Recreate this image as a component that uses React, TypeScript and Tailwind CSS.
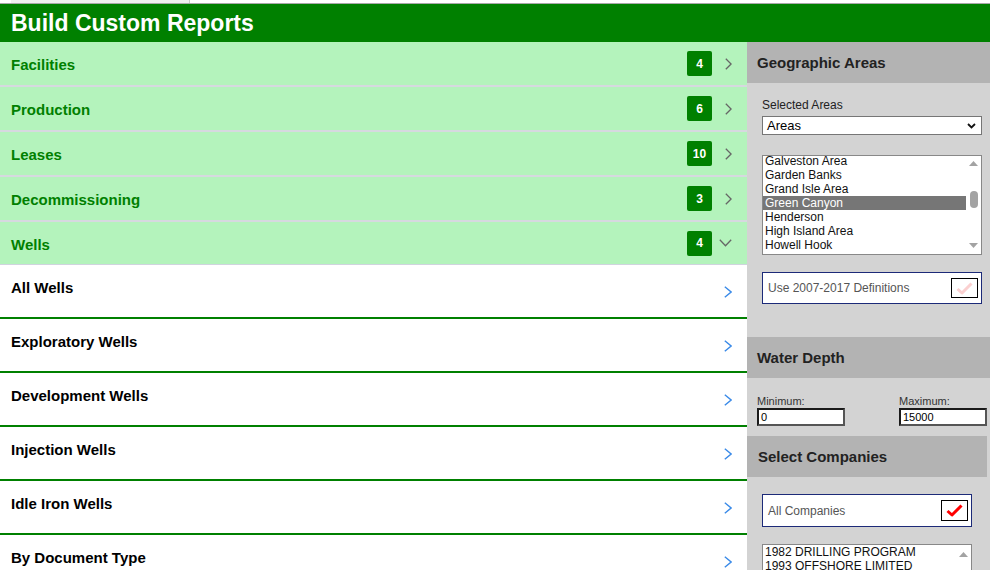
import React from 'react';

const sections = [
  { name: 'Facilities', count: 4 },
  { name: 'Production', count: 6 },
  { name: 'Leases', count: 10 },
  { name: 'Decommissioning', count: 3 },
];

const wells = [
  'All Wells',
  'Exploratory Wells',
  'Development Wells',
  'Injection Wells',
  'Idle Iron Wells',
  'By Document Type',
];

const areas = [
  'Galveston Area',
  'Garden Banks',
  'Grand Isle Area',
  'Green Canyon',
  'Henderson',
  'High Island Area',
  'Howell Hook',
];

const ChevronRight = ({ color = '#666', w = 7, h = 12, sw = 1.3 }: { color?: string; w?: number; h?: number; sw?: number }) => (
  <svg width={w} height={h} viewBox={`0 0 ${w} ${h}`} fill="none">
    <path d={`M0.8 0.8 L${w - 0.9} ${h / 2} L0.8 ${h - 0.8}`} stroke={color} strokeWidth={sw} />
  </svg>
);

const ChevronDown = () => (
  <svg width="13" height="8" viewBox="0 0 13 8" fill="none">
    <path d="M0.8 0.8 L6.5 6.8 L12.2 0.8" stroke="#666" strokeWidth="1.3" />
  </svg>
);

const Check = ({ color }: { color: string }) => (
  <svg width="17" height="13" viewBox="0 0 17 13" fill="none">
    <path d="M1.5 7 L6 11 L15.5 1.5" stroke={color} strokeWidth="3" strokeLinejoin="round" />
  </svg>
);

const Badge = ({ n }: { n: number }) => (
  <div className="w-[25px] h-[25px] rounded-[2px] bg-[#008000] text-white text-[12px] font-bold flex items-center justify-center">
    {n}
  </div>
);

const SectionHeader = ({ children }: { children: React.ReactNode }) => (
  <div className="h-[41px] bg-[#b3b3b3] pl-[10px] pt-[2px] flex items-center text-[15px] font-bold text-[#222]">
    {children}
  </div>
);

const App: React.FC = () => {
  return (
    <div className="w-[990px] h-[570px] overflow-hidden bg-white font-['Liberation_Sans',Arial,sans-serif]">
      {/* browser-ish top strip */}
      <div className="h-[3px] bg-white flex">
        <div className="ml-[11px] w-[179px] h-full bg-[#f0f0f0] border-r border-[#c8c8c8]" />
      </div>
      <div className="h-px bg-[#a8a8a8]" />

      {/* Title bar */}
      <div className="h-[38px] bg-[#008000] px-[11px] flex items-center text-white text-[23px] font-bold">
        Build Custom Reports
      </div>

      <div className="flex">
        {/* Left column */}
        <div className="w-[747px] shrink-0">
          {sections.map((s) => (
            <div
              key={s.name}
              className="h-[45px] border-b-2 border-[#d6d9df] bg-[#b4f3bc] flex items-center pl-[11px] pr-[15px]"
            >
              <span className="flex-1 pt-[4px] text-[15px] font-bold text-[#008000]">{s.name}</span>
              <Badge n={s.count} />
              <div className="ml-[7px] w-[13px] flex justify-end">
                <ChevronRight />
              </div>
            </div>
          ))}
          <div className="h-[43px] border-b border-[#d0d4de] bg-[#b4f3bc] flex items-center pl-[11px] pr-[15px]">
            <span className="flex-1 pt-[4px] text-[15px] font-bold text-[#008000]">Wells</span>
            <Badge n={4} />
            <div className="ml-[7px] w-[13px] flex justify-end">
              <ChevronDown />
            </div>
          </div>

          {wells.map((w) => (
            <div key={w} className="h-[54px] border-b-2 border-[#008000] flex pl-[11px] pr-[15px]">
              <span className="flex-1 pt-[14px] leading-[18px] text-[15px] font-bold text-black">{w}</span>
              <div className="self-center mt-[2px]">
                <ChevronRight color="#3a8ae8" w={8} h={12} sw={1.4} />
              </div>
            </div>
          ))}
        </div>

        {/* Right panel */}
        <div className="flex-1 bg-[#d3d3d3]">
          <SectionHeader>Geographic Areas</SectionHeader>
          <div className="pl-[15px] pt-[15px] pb-[33px]">
            <div className="text-[12px] leading-[14px] text-[#222]">Selected Areas</div>
            <div className="mt-[4px] w-[220px] h-[19px] bg-white border border-[#767676] flex items-center pl-[4px] pr-[5px] text-[13px] text-black">
              <span className="flex-1">Areas</span>
              <svg width="9" height="6" viewBox="0 0 9 6" fill="none">
                <path d="M1 1 L4.5 4.5 L8 1" stroke="#111" strokeWidth="1.8" />
              </svg>
            </div>

            <div className="mt-[20px] w-[220px] h-[100px] bg-white border border-[#888] relative overflow-hidden">
              <div className="-mt-[2px] pr-[15px]">
                {areas.map((a) => (
                  <div
                    key={a}
                    className={`h-[14px] leading-[14px] pl-[2px] text-[12px] ${
                      a === 'Green Canyon' ? 'bg-[#767676] text-white' : 'text-[#111]'
                    }`}
                  >
                    {a}
                  </div>
                ))}
              </div>
              {/* scrollbar */}
              <div className="absolute right-0 top-0 bottom-0 w-[15px] flex flex-col items-center">
                <svg className="mt-[5px]" width="9" height="5" viewBox="0 0 9 5">
                  <path d="M0 5 L4.5 0 L9 5 Z" fill="#a3a3a3" />
                </svg>
                <div className="mt-[25px] w-[8px] h-[17px] rounded-full bg-[#a3a3a3]" />
                <svg className="mt-auto mb-[6px]" width="9" height="5" viewBox="0 0 9 5">
                  <path d="M0 0 L9 0 L4.5 5 Z" fill="#a3a3a3" />
                </svg>
              </div>
            </div>

            <div className="mt-[17px] w-[220px] h-[32px] bg-white border border-[#1c2a78] flex items-center pl-[5px] pr-[3px]">
              <span className="flex-1 text-[12px] text-[#555]">Use 2007-2017 Definitions</span>
              <div className="w-[27px] h-[20px] border border-black bg-white flex items-center justify-center">
                <Check color="#fbd0d0" />
              </div>
            </div>
          </div>

          <SectionHeader>Water Depth</SectionHeader>
          <div className="flex justify-between pl-[10px] pr-[3px] pt-[16px] pb-[10px]">
            {[
              ['Minimum:', '0'],
              ['Maximum:', '15000'],
            ].map(([label, val]) => (
              <div key={label} className="w-[88px]">
                <div className="text-[11px] leading-[14px] text-[#333]">{label}</div>
                <div className="h-[18px] bg-white border-2 border-t-[#1a1a1a] border-l-[#1a1a1a] border-b-[#555] border-r-[#555] pl-[2px] text-[11px] leading-[14px] text-black">
                  {val}
                </div>
              </div>
            ))}
          </div>

          <div className="mr-[3px]">
            <SectionHeader>
              <span className="pl-px">Select Companies</span>
            </SectionHeader>
          </div>
          <div className="pl-[15px] pt-[17px]">
            <div className="w-[210px] h-[33px] bg-white border border-[#1c2a78] flex items-center pl-[5px] pr-[3px]">
              <span className="flex-1 text-[12px] text-[#555]">All Companies</span>
              <div className="w-[27px] h-[21px] border-[1.5px] border-black bg-white flex items-center justify-center">
                <Check color="#ff0000" />
              </div>
            </div>
            <div className="mt-[17px] w-[210px] h-[60px] bg-white border border-[#888] relative overflow-hidden">
              <div className="pr-[15px]">
                {['1982 DRILLING PROGRAM', '1993 OFFSHORE LIMITED', '2001 ENERGY LLC'].map((c) => (
                  <div key={c} className="h-[14px] leading-[14px] pl-[2px] text-[12px] text-[#111]">
                    {c}
                  </div>
                ))}
              </div>
              <div className="absolute right-0 top-0 bottom-0 w-[15px] flex flex-col items-center">
                <svg className="mt-[7px]" width="9" height="5" viewBox="0 0 9 5">
                  <path d="M0 5 L4.5 0 L9 5 Z" fill="#a3a3a3" />
                </svg>
              </div>
            </div>
          </div>
        </div>
      </div>
    </div>
  );
};

export default App;
